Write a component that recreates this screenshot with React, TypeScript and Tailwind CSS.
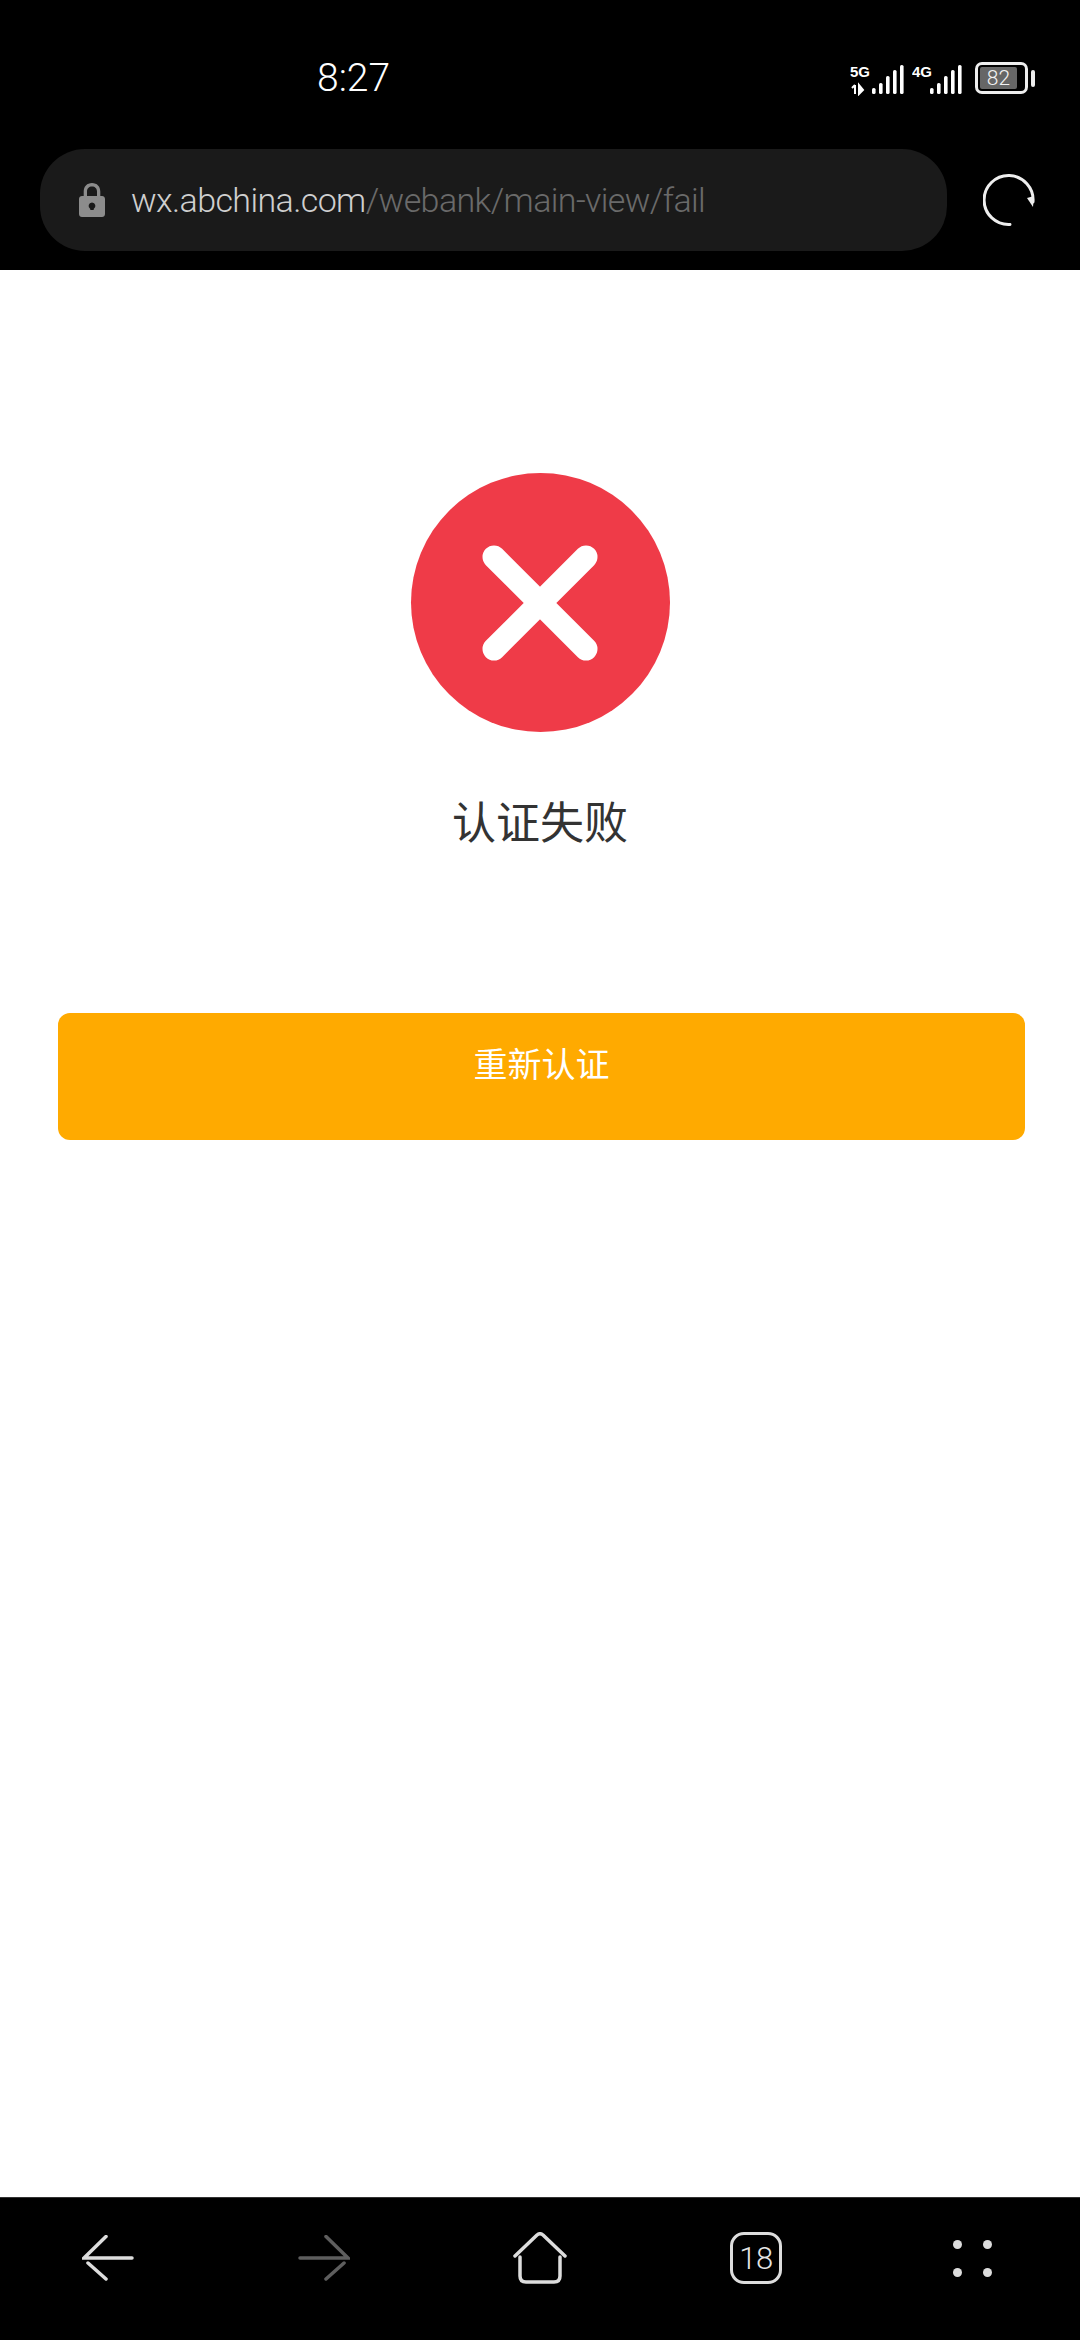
const cjk = "font-['Roboto','Noto_Sans_CJK_SC',sans-serif]";

function Signal({ first }: { first?: boolean }) {
  const bars = first
    ? [
        { x: 22, h: 6 },
        { x: 29, h: 11 },
        { x: 36, h: 18 },
        { x: 43, h: 24 },
        { x: 50, h: 29 },
      ]
    : [
        { x: 18, h: 6 },
        { x: 25, h: 11 },
        { x: 32, h: 18 },
        { x: 39, h: 24 },
        { x: 46, h: 29 },
      ];
  return (
    <svg width={first ? 54 : 50} height="32" viewBox={first ? "0 0 54 32" : "0 0 50 32"} fill="white">
      <text x="0" y="13" fontSize="15" fontWeight="700" fontFamily="Liberation Sans Narrow, Liberation Sans, sans-serif">
        {first ? "5G" : "4G"}
      </text>
      {first && <path d="M5 21 v9 M2 24 l3-3 M9 21 v9 l4-4z" stroke="white" strokeWidth="2" fill="white" />}
      {bars.map((b) => (
        <rect key={b.x} x={b.x} y={30 - b.h} width="3.6" height={b.h} rx="1.6" />
      ))}
    </svg>
  );
}

function Battery() {
  return (
    <div className="flex items-center gap-[3px]">
      <div className="w-[53px] h-[32px] rounded-[7px] border-[3px] border-[#eeeeee] p-[2px]">
        <div className="h-full w-[37px] bg-[#666666] rounded-[2px] flex items-center justify-center text-[#f2f2f2] text-[21px] leading-none font-light font-['Roboto',sans-serif]">
          82
        </div>
      </div>
      <div className="w-[4px] h-[17px] bg-[#eeeeee] rounded-[2px]" />
    </div>
  );
}

export default function App() {
  return (
    <div className={`flex flex-col h-[2340px] bg-white ${cjk}`}>
      <header className="h-[270px] bg-black shrink-0">
        <div className="h-[149px] flex pt-[60px] pl-[317px] pr-[45px]">
          <span className="text-white text-[39px] leading-[37px] font-light">8:27</span>
          <div className="ml-auto flex items-start gap-[12px] pt-[4px]">
            <div className="flex gap-[8px]">
              <Signal first />
              <Signal />
            </div>
            <div className="-mt-[2px] ml-[1px]">
              <Battery />
            </div>
          </div>
        </div>
        <div className="flex items-center pl-[40px]">
          <div className="w-[907px] h-[102px] rounded-[45px] bg-[#1a1a1a] flex items-center pl-[39px]">
            <svg width="26" height="34" viewBox="0 0 26 34" fill="#8c8c8c">
              <path
                fillRule="evenodd"
                d="M13 0c-5 0-8.300 3.500-8.300 8.500V13H3c-1.700 0-3 1.300-3 3v15c0 1.700 1.300 3 3 3h20c1.700 0 3-1.300 3-3V16c0-1.700-1.300-3-3-3h-1.700V8.500C21.300 3.500 18 0 13 0zM8 13V8.500C8 5.400 10 3.400 13 3.400s5 2 5 5.100V13H8zm5 6.500a3.500 3.500 0 0 1 1.700 6.500v1h-3.400v-1A3.500 3.500 0 0 1 13 19.500z"
              />
            </svg>
            <div className="ml-[26px] text-[34px] font-light leading-none tracking-[-0.6px] whitespace-nowrap">
              <span className="text-[#cfcfcf]">wx.abchina.com</span>
              <span className="text-[#6a6a6a]">/webank/main-view/fail</span>
            </div>
          </div>
          <svg className="ml-[36px]" width="52" height="54" viewBox="0 0 52 54" fill="none">
            <path
              d="M27 51.500A24.500 24.500 0 1 1 50 29"
              stroke="#eeeeee"
              strokeWidth="3"
              strokeLinecap="round"
            />
            <path d="M50 34 L44 25 L51 23 Z" fill="#eeeeee" />
          </svg>
        </div>
      </header>

      <main className="flex-1 flex flex-col items-center pt-[203px]">
        <div className="w-[259px] h-[259px] rounded-full bg-[#ef3b48] flex items-center justify-center">
          <svg width="116" height="116" viewBox="0 0 116 116" fill="none">
            <path d="M12 12 L104 104 M104 12 L12 104" stroke="white" strokeWidth="23" strokeLinecap="round" />
          </svg>
        </div>
        <h1 className="mt-[62px] text-[44px] leading-[60px] font-normal text-[#333333]">认证失败</h1>
        <button className="mt-[159px] self-start ml-[58px] w-[967px] h-[127px] rounded-[12px] bg-[#ffaa00] text-white text-[34px] leading-[40px] pb-[24px]">
          重新认证
        </button>
      </main>

      <nav className="h-[143px] shrink-0 bg-black border-t border-[#333333] grid grid-cols-5 pb-[22px]">
        <div className="flex items-center justify-center">
          <svg width="52" height="46" viewBox="0 0 52 46" fill="none" stroke="#dddddd" strokeWidth="3.500" strokeLinecap="round">
            <path d="M50 23 H2 L24 1.500 M6 28 L24 44" />
          </svg>
        </div>
        <div className="flex items-center justify-center">
          <svg width="52" height="46" viewBox="0 0 52 46" fill="none" stroke="#5e5e5e" strokeWidth="3.500" strokeLinecap="round">
            <path d="M2 23 H50 L28 1.500 M46 28 L28 44" />
          </svg>
        </div>
        <div className="flex items-center justify-center">
          <svg width="54" height="52" viewBox="0 0 54 52" fill="none" stroke="#dddddd" strokeWidth="3.500" strokeLinecap="round" strokeLinejoin="round">
            <path d="M2 24 L24 3 Q27 0.500 30 3 L52 24" />
            <path d="M7 25 V44 Q7 50 13 50 H41 Q47 50 47 44 V25" />
          </svg>
        </div>
        <div className="flex items-center justify-center">
          <div className="w-[52px] h-[52px] rounded-[14px] border-[3.500px] border-[#dddddd] flex items-center justify-center text-[#e4e4e4] text-[31px] font-light leading-none tracking-[-0.5px]">
            18
          </div>
        </div>
        <div className="flex items-center justify-center">
          <div className="grid grid-cols-2 gap-x-[21px] gap-y-[19px]">
            <span className="w-[9px] h-[9px] rounded-full bg-[#dddddd]" />
            <span className="w-[9px] h-[9px] rounded-full bg-[#dddddd]" />
            <span className="w-[9px] h-[9px] rounded-full bg-[#dddddd]" />
            <span className="w-[9px] h-[9px] rounded-full bg-[#dddddd]" />
          </div>
        </div>
      </nav>
    </div>
  );
}
